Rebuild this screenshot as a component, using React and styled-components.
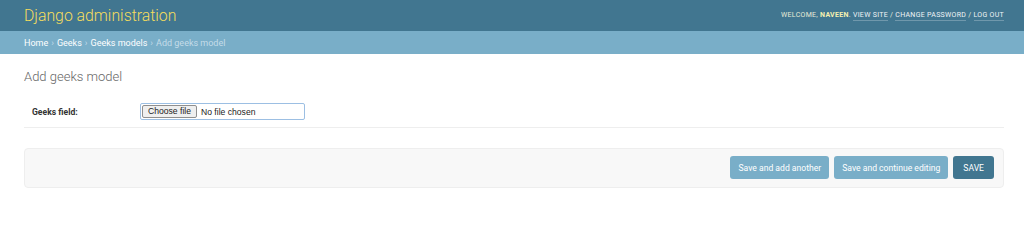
import React from 'react'
import styled, { createGlobalStyle } from 'styled-components'

const GlobalStyle = createGlobalStyle`
  html, body {
    margin: 0;
    padding: 0;
    background: #fff;
  }
  body {
    font-family: Roboto, "Liberation Sans", Arial, sans-serif;
    color: #333;
  }
`

const Header = styled.header`
  display: flex;
  align-items: center;
  justify-content: space-between;
  height: 31px;
  padding: 0 20px 0 24px;
  background: #417690;
`

const Branding = styled.h1`
  margin: 0;
  font-size: 15.8px;
  font-weight: 300;
  color: #f5dd5d;
  line-height: 1;
`

const UserTools = styled.div`
  font-size: 7px;
  letter-spacing: 0.3px;
  text-transform: uppercase;
  color: #e8ecd8;
  line-height: 1;
`

const UserName = styled.strong`
  color: #f5f0b0;
  font-weight: 700;
`

const ToolLink = styled.a`
  color: #f0f4f6;
  text-decoration: none;
  border-bottom: 1px solid rgba(255, 255, 255, 0.25);
  padding-bottom: 1px;
`

const Breadcrumbs = styled.nav`
  display: flex;
  align-items: center;
  height: 23px;
  padding: 0 24px;
  background: #79aec8;
  font-size: 9px;
  color: #c4dce8;
`

const Crumb = styled.a`
  color: #fff;
  text-decoration: none;
`

const Sep = styled.span`
  margin: 0 3px;
`

const Content = styled.main`
  padding: 14px 20px 0 24px;
`

const Title = styled.h1`
  margin: 0 0 11px;
  font-size: 13px;
  font-weight: 300;
  line-height: 17px;
  color: #666;
`

const FormRow = styled.div`
  display: flex;
  align-items: center;
  padding: 7px 8px;
  border-bottom: 1px solid #eee;
`

const Label = styled.label`
  width: 108px;
  font-size: 8.6px;
  font-weight: 700;
  color: #333;
`

const FileBox = styled.div`
  display: flex;
  align-items: center;
  box-sizing: border-box;
  width: 165px;
  height: 17px;
  padding: 0 1px;
  border: 1px solid #9cbfe3;
  border-radius: 2px;
  background: #fff;
  font-size: 8.6px;
  font-family: "Liberation Sans", Arial, sans-serif;
`

const ChooseButton = styled.span`
  box-sizing: border-box;
  height: 13px;
  line-height: 11px;
  padding: 0 5px;
  border: 1px solid #8f8f8f;
  border-radius: 2px;
  background: #efefef;
  color: #222;
`

const FileName = styled.span`
  margin-left: 4px;
  color: #222;
`

const SubmitRow = styled.div`
  display: flex;
  justify-content: flex-end;
  gap: 5px;
  margin-top: 20px;
  padding: 7px 9px 8px;
  height: 23px;
  background: #f8f8f8;
  border: 1px solid #eee;
  border-radius: 4px;
`

const Button = styled.button`
  box-sizing: border-box;
  height: 23px;
  padding: 0 ${p => (p.$primary ? 10 : 8)}px;
  border: none;
  border-radius: 3px;
  background: ${p => (p.$primary ? '#417690' : '#79aec8')};
  color: #fff;
  font-family: Roboto, "Liberation Sans", Arial, sans-serif;
  font-size: 8.6px;
  cursor: pointer;
`

export default function App() {
  return (
    <>
      <GlobalStyle />
      <Header>
        <Branding>Django administration</Branding>
        <UserTools>
          Welcome, <UserName>Naveen</UserName>.{' '}
          <ToolLink href="#">View site</ToolLink> /{' '}
          <ToolLink href="#">Change password</ToolLink> /{' '}
          <ToolLink href="#">Log out</ToolLink>
        </UserTools>
      </Header>
      <Breadcrumbs>
        <Crumb href="#">Home</Crumb>
        <Sep>›</Sep>
        <Crumb href="#">Geeks</Crumb>
        <Sep>›</Sep>
        <Crumb href="#">Geeks models</Crumb>
        <Sep>›</Sep>
        Add geeks model
      </Breadcrumbs>
      <Content>
        <Title>Add geeks model</Title>
        <FormRow>
          <Label>Geeks field:</Label>
          <FileBox>
            <ChooseButton>Choose file</ChooseButton>
            <FileName>No file chosen</FileName>
          </FileBox>
        </FormRow>
        <SubmitRow>
          <Button>Save and add another</Button>
          <Button>Save and continue editing</Button>
          <Button $primary>SAVE</Button>
        </SubmitRow>
      </Content>
    </>
  )
}
